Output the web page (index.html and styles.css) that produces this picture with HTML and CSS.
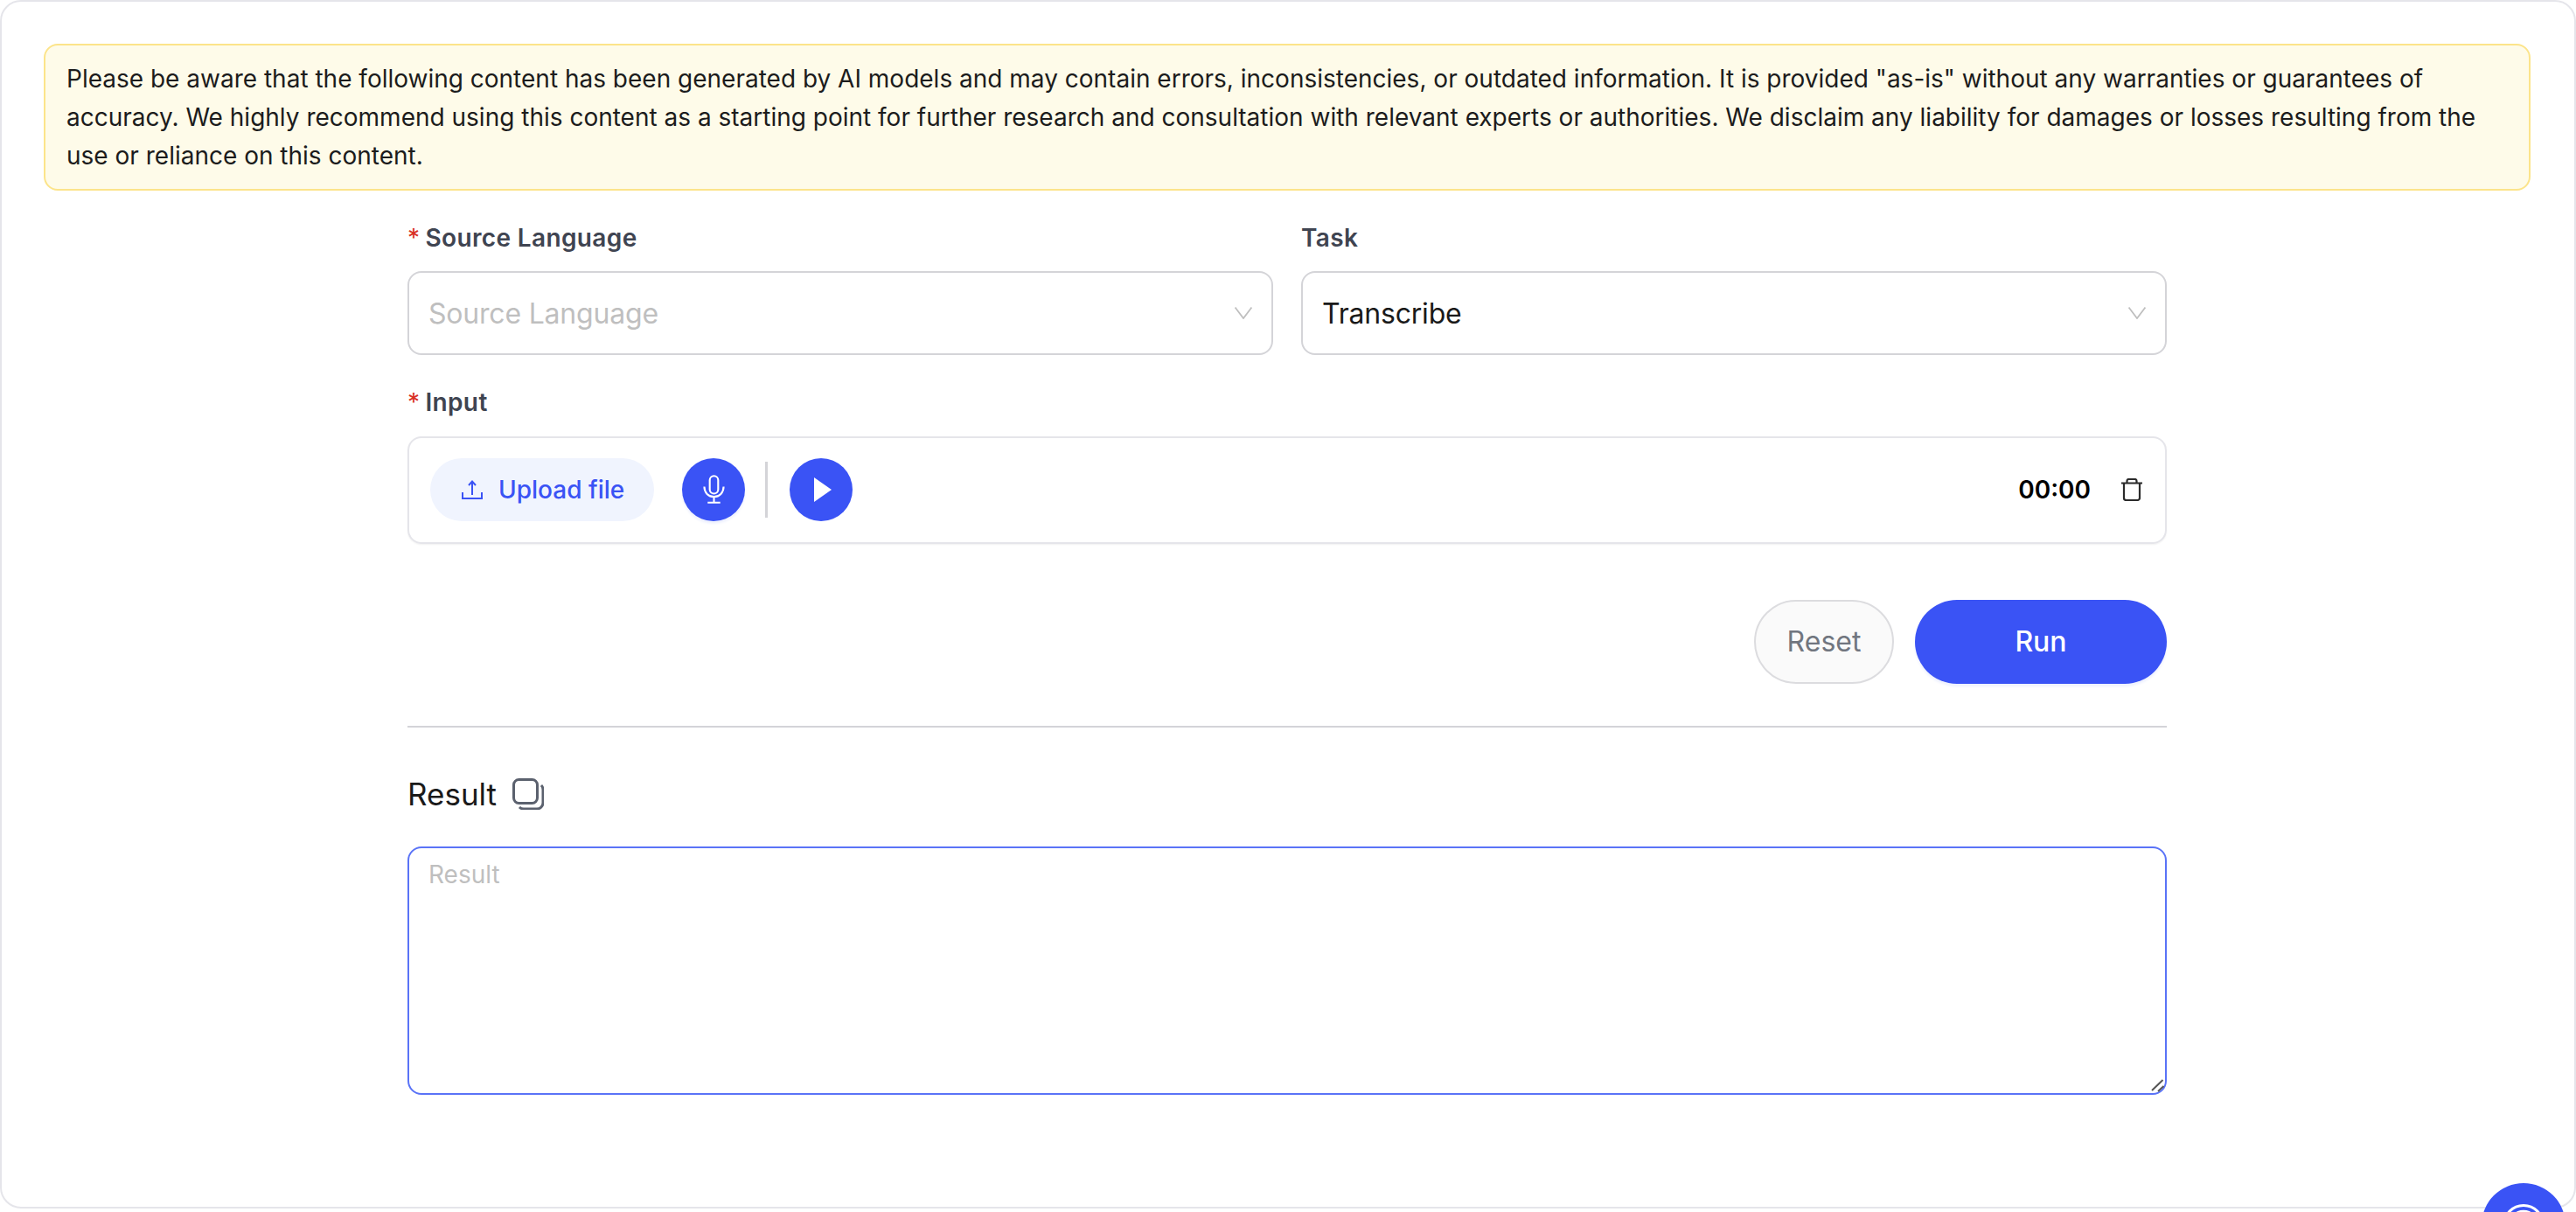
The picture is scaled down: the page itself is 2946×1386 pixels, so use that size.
FILE: index.html
```html
<!DOCTYPE html>
<html lang="en">
<head>
<meta charset="utf-8">
<title>Speech transcription</title>
<link rel="stylesheet" href="styles.css">
</head>
<body>
<main class="card">
  <div class="alert">Please be aware that the following content has been generated by AI models and may contain errors, inconsistencies, or outdated information. It is provided "as-is" without any warranties or guarantees of accuracy. We highly recommend using this content as a starting point for further research and consultation with relevant experts or authorities. We disclaim any liability for damages or losses resulting from the use or reliance on this content.</div>
  <form class="form">
    <div class="row">
      <div class="field">
        <div class="label"><span class="star">*</span>Source Language</div>
        <div class="select">
          <span class="placeholder">Source Language</span>
          <svg class="chev" viewBox="0 0 20 14"><path d="M.5.5L10 13 19.500.5"/></svg>
        </div>
      </div>
      <div class="field">
        <div class="label">Task</div>
        <div class="select">
          <span class="value">Transcribe</span>
          <svg class="chev" viewBox="0 0 20 14"><path d="M.5.5L10 13 19.500.5"/></svg>
        </div>
      </div>
    </div>
    <div class="label label-input"><span class="star">*</span>Input</div>
    <div class="input-box">
      <div class="upload">
        <svg class="upload-icon" viewBox="0 0 24 24"><path d="M1 15v7h22v-7M12 18V3M8 7l4-4.500 4 4.500"/></svg>
        <span>Upload file</span>
      </div>
      <div class="round mic">
        <svg viewBox="0 0 26 34"><rect x="8" y="1.200" width="10" height="21" rx="5"/><path d="M1.500 14c0 7 5 12 11.500 12s11.500-5 11.500-12M13 26v7M5.500 32.800h15"/></svg>
      </div>
      <div class="vline"></div>
      <div class="round play">
        <svg viewBox="0 0 20 28"><path class="solid" d="M0 0l20 14L0 28z"/></svg>
      </div>
      <div class="time">00:00</div>
      <svg class="trash" viewBox="0 0 24 26"><path d="M0 5.500h24M6.500 5.500V3a2 2 0 0 1 2-2h7a2 2 0 0 1 2 2v2.500M3 5.500v17a2.500 2.500 0 0 0 2.500 2.500h13a2.500 2.500 0 0 0 2.500-2.500v-17"/></svg>
    </div>
    <div class="actions">
      <div class="btn btn-reset">Reset</div>
      <div class="btn btn-run">Run</div>
    </div>
    <hr class="rule">
    <div class="result-head">
      <span>Result</span>
      <svg class="copy" viewBox="0 0 36 36"><rect x="1.500" y="1.500" width="27" height="27" rx="6"/><path d="M33 8c1.500 1.500 2 3 2 5v15a7 7 0 0 1-7 7H13c-2 0-3.500-.5-5-2"/></svg>
    </div>
    <div class="result-wrap">
      <textarea class="result" placeholder="Result"></textarea>
      <svg class="grip" viewBox="0 0 16 16"><path d="M1 14L13.500 2M8 15l6.500-6"/></svg>
    </div>
  </form>
</main>
<div class="fab">
  <svg viewBox="0 0 56 56"><circle class="ring-outer" cx="28" cy="28" r="22.500"/><circle class="ring-inner" cx="28" cy="28" r="16"/></svg>
</div>
</body>
</html>
```

FILE: styles.css
```css
* { box-sizing: border-box; }
html, body { margin: 0; height: 100%; overflow: hidden; background: #fff; }
body { font-family: Inter, "Noto Sans", sans-serif; color: #1a1a1a; }
.card {
  height: 1382px;
  padding: 48px 50px 0 48px;
  border: 2px solid #e5e5ea;
  border-radius: 24px;
  background: #fff;
}
.alert {
  padding: 16px 24px;
  border: 2px solid #fce48a;
  border-radius: 16px;
  background: #fefbe9;
  font-size: 28px;
  line-height: 44px;
  color: #1c1c1c;
}
.form { width: 2012px; margin: 0 auto; }
.row { display: grid; grid-template-columns: 990px 990px; column-gap: 32px; }
.label {
  font-size: 28px;
  line-height: 44px;
  font-weight: 600;
  letter-spacing: .37px;
  color: #3f4451;
}
.row .label { margin-top: 32px; margin-bottom: 16px; }
.label-input { margin-top: 32px; margin-bottom: 17px; }
.star { margin-right: 6px; color: #d93025; font-weight: 400; }
.select {
  display: flex;
  align-items: center;
  justify-content: space-between;
  height: 96px;
  padding: 0 22px;
  border: 2px solid #d4d4d8;
  border-radius: 16px;
  font-size: 32px;
  letter-spacing: -.2px;
}
.placeholder { color: #bfbfbf; }
.value { color: #1a1a1a; }
.chev { width: 20px; height: 14px; }
.chev path { fill: none; stroke: #bfbfbf; stroke-width: 1.800; }
.input-box {
  display: flex;
  align-items: center;
  height: 123px;
  padding: 0 24px 2px;
  border: 2px solid #e5e5ea;
  border-radius: 16px;
  box-shadow: 0 1px 2px rgba(0, 0, 0, .06);
}
.upload {
  display: flex;
  align-items: center;
  gap: 18px;
  height: 72px;
  padding: 0 34px 0 36px;
  border-radius: 36px;
  background: #f0f4fe;
  color: #3a53f5;
  font-size: 28px;
  font-weight: 500;
}
.upload-icon { width: 24px; height: 24px; }
.upload-icon path { fill: none; stroke: #3a53f5; stroke-width: 2; }
.round {
  display: flex;
  align-items: center;
  justify-content: center;
  width: 72px;
  height: 72px;
  border-radius: 50%;
  background: #3a53f5;
}
.mic { margin-left: 32px; box-shadow: 0 3px 3px #eef1fe; }
.mic svg { width: 25px; height: 33px; }
.mic rect, .mic path { fill: none; stroke: #fff; stroke-width: 2.200; }
.play svg { width: 20px; height: 28px; margin-left: 4px; }
.solid { fill: #fff; }
.vline { width: 3px; height: 64px; margin: 0 25px 0 23px; background: #d4d4d8; }
.time { margin-left: auto; font-size: 28px; font-weight: 600; color: #000; }
.trash { width: 24px; height: 26px; margin-left: 35px; margin-right: 2px; }
.trash path { fill: none; stroke: #2b2b2b; stroke-width: 2.200; }
.actions { display: flex; justify-content: flex-end; gap: 24px; margin-top: 64px; }
.btn {
  display: flex;
  align-items: center;
  justify-content: center;
  height: 96px;
  padding-bottom: 2px;
  border-radius: 48px;
  font-size: 32px;
}
.btn-reset { width: 160px; border: 2px solid #dcdcdf; background: #fafafa; color: #71767f; }
.btn-run { width: 288px; background: #3a53f5; color: #fff; font-weight: 500; box-shadow: 0 3px 3px #eef1fe; }
.rule { height: 2px; margin: 48px 0 0; border: 0; background: #d4d4d8; }
.result-head {
  display: flex;
  align-items: center;
  gap: 18px;
  height: 44px;
  margin-top: 54px;
  font-size: 35px;
  color: #1a1a1a;
}
.copy { width: 36px; height: 36px; }
.copy rect, .copy path { fill: none; stroke: #5b616e; stroke-width: 3; }
.result-wrap { position: relative; margin-top: 38px; }
.result {
  display: block;
  width: 100%;
  height: 284px;
  padding: 10px 22px;
  border: 2px solid #5a73f7;
  border-radius: 16px;
  outline: 0;
  resize: none;
  font-family: Inter, "Noto Sans", sans-serif;
  font-size: 28px;
  line-height: 40px;
}
.result::placeholder { color: #bfbfbf; }
.grip { position: absolute; right: 2px; bottom: 3px; width: 16px; height: 16px; }
.grip path { fill: none; stroke: #555; stroke-width: 2; }
.fab {
  position: fixed;
  left: 2838px;
  top: 1353px;
  display: flex;
  align-items: center;
  justify-content: center;
  width: 96px;
  height: 96px;
  border-radius: 50%;
  background: #3a53f5;
}
.fab svg { width: 56px; height: 56px; }
.fab circle { fill: none; stroke: #fff; }
.ring-outer { stroke-width: 3; }
.ring-inner { stroke-width: 2.500; }
```
